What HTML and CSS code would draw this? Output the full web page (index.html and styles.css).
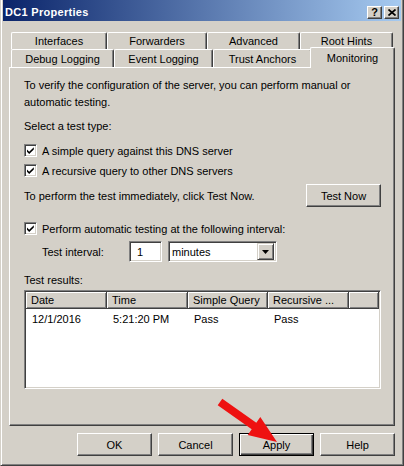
FILE: index.html
```html
<!DOCTYPE html>
<html>
<head>
<meta charset="utf-8">
<title>DC1 Properties</title>
<link rel="stylesheet" href="styles.css">
</head>
<body>
<div class="window">
  <div class="titlebar">
    <span class="title">DC1 Properties</span>
    <div class="caption-btns">
      <span class="cap-btn help">?</span>
      <span class="cap-btn close"><svg width="8" height="7" viewBox="0 0 8 7"><path d="M0.5 0.5 L7.5 6.5 M7.5 0.5 L0.5 6.5" stroke="#000" stroke-width="1.7" fill="none"/></svg></span>
    </div>
  </div>

  <div class="tabs">
    <div class="tab-row row1">
      <div class="tab w-interfaces">Interfaces</div>
      <div class="tab w-forwarders">Forwarders</div>
      <div class="tab w-advanced">Advanced</div>
      <div class="tab w-roothints">Root Hints</div>
    </div>
    <div class="tab-row row2">
      <div class="tab w-debug">Debug Logging</div>
      <div class="tab w-event">Event Logging</div>
      <div class="tab w-trust">Trust Anchors</div>
      <div class="tab w-monitoring active">Monitoring</div>
    </div>
  </div>

  <div class="panel">
    <p class="intro">To verify the configuration of the server, you can perform manual or<br>automatic testing.</p>
    <p class="line select-label">Select a test type:</p>

    <div class="check check1">
      <span class="box"><svg width="9" height="9" viewBox="0 0 9 9"><path d="M1 3.6 L3.2 5.8 L7.8 1.2 L7.8 3.4 L3.2 8 L1 5.8 Z" fill="#000"/></svg></span>
      <span class="check-label">A simple query against this DNS server</span>
    </div>
    <div class="check check2">
      <span class="box"><svg width="9" height="9" viewBox="0 0 9 9"><path d="M1 3.6 L3.2 5.8 L7.8 1.2 L7.8 3.4 L3.2 8 L1 5.8 Z" fill="#000"/></svg></span>
      <span class="check-label">A recursive query to other DNS servers</span>
    </div>

    <div class="now-row">
      <span>To perform the test immediately, click Test Now.</span>
      <span class="btn">Test Now</span>
    </div>

    <div class="check check3">
      <span class="box"><svg width="9" height="9" viewBox="0 0 9 9"><path d="M1 3.6 L3.2 5.8 L7.8 1.2 L7.8 3.4 L3.2 8 L1 5.8 Z" fill="#000"/></svg></span>
      <span class="check-label">Perform automatic testing at the following interval:</span>
    </div>

    <div class="interval-row">
      <span class="interval-label">Test interval:</span>
      <span class="field num">1</span>
      <span class="field combo">
        <span class="combo-text">minutes</span>
        <span class="combo-btn"><svg width="7" height="4" viewBox="0 0 7 4"><path d="M0 0 H7 L3.5 4 Z" fill="#000"/></svg></span>
      </span>
    </div>

    <p class="line results-label">Test results:</p>

    <div class="listbox">
      <div class="lv-header">
        <span class="hcell c1">Date</span>
        <span class="hcell c2">Time</span>
        <span class="hcell c3">Simple Query</span>
        <span class="hcell c4">Recursive ...</span>
        <span class="hcell c5"></span>
      </div>
      <div class="lv-row">
        <span class="cell c1">12/1/2016</span>
        <span class="cell c2">5:21:20 PM</span>
        <span class="cell c3">Pass</span>
        <span class="cell c4">Pass</span>
      </div>
    </div>
  </div>

  <div class="buttons">
    <span class="btn">OK</span>
    <span class="btn">Cancel</span>
    <span class="btn default">Apply</span>
    <span class="btn">Help</span>
  </div>
</div>

<svg class="arrow" width="404" height="466" viewBox="0 0 404 466">
  <polygon points="222.3,398.7 256.3,422.7 260.3,417 277,442 247.7,435 251.7,429.3 217.7,405.3" fill="#ee1111"/>
</svg>
</body>
</html>
```

FILE: styles.css
```css
* {
  box-sizing: border-box;
}

html,
body {
  margin: 0;
  padding: 0;
}

body {
  position: relative;
  width: 404px;
  height: 466px;
  overflow: hidden;
  background: #d4d0c8;
  font-family: "Liberation Sans", Arial, sans-serif;
  font-size: 11px;
  color: #000;
}

.window {
  height: 466px;
  border-left: 1px solid #d4d0c8;
  border-right: 1px solid #404040;
  border-bottom: 1px solid #404040;
  box-shadow: inset 1px 0 0 #fff, inset -1px -1px 0 #808080;
  padding: 0 2px 2px 2px;
  display: flex;
  flex-direction: column;
}

/* Title bar */
.titlebar {
  height: 21px;
  flex: none;
  display: flex;
  align-items: flex-start;
  justify-content: space-between;
  background: linear-gradient(to right, #0a246a, #a6caf0);
  padding: 0 2px 0 2px;
}

.title {
  color: #fff;
  font-weight: bold;
  font-size: 11px;
  letter-spacing: 0.3px;
  line-height: 13px;
  margin-top: 6px;
}

.caption-btns {
  display: flex;
  gap: 2px;
  margin-top: 6px;
}

.cap-btn {
  width: 15px;
  height: 13px;
  background: #d4d0c8;
  border: 1px solid;
  border-color: #fff #404040 #404040 #fff;
  box-shadow: inset -1px -1px 0 #808080;
  display: flex;
  align-items: center;
  justify-content: center;
  font-weight: bold;
  font-size: 11px;
  line-height: 11px;
}

/* Tabs */
.tabs {
  margin: 11px 8px 0 8px;
  flex: none;
}

.tab-row {
  display: flex;
}

.row1 {
  height: 17px;
}

.row2 {
  height: 18px;
}

.tab {
  flex: none;
  background: #d4d0c8;
  border-top: 1px solid #fff;
  border-left: 1px solid #fff;
  border-right: 1px solid #404040;
  box-shadow: inset -1px 0 0 #808080;
  border-radius: 2px 2px 0 0;
  display: flex;
  align-items: center;
  justify-content: center;
  white-space: nowrap;
}

.tab.active {
  margin: -2px -2px -1px -2px;
  position: relative;
  z-index: 1;
  padding-bottom: 1px;
}

.w-interfaces { width: 96px; }
.w-forwarders { width: 100px; }
.w-advanced { width: 93px; }
.w-roothints { width: 93px; }
.w-debug { width: 103px; }
.w-event { width: 99px; }
.w-trust { width: 99px; }
.w-monitoring { width: 85px; }

/* Panel */
.panel {
  flex: none;
  margin: 0 6px;
  height: 359px;
  border: 1px solid;
  border-color: #fff #404040 #404040 #fff;
  box-shadow: inset -1px -1px 0 #808080;
  padding: 9px 13px 0 14px;
}

.intro {
  margin: 0;
  line-height: 17px;
}

.line {
  margin: 0;
  line-height: 17px;
}

.select-label {
  margin-top: 7px;
}

.check {
  display: flex;
  align-items: center;
  height: 13px;
  gap: 5px;
}

.check1 { margin-top: 9px; }
.check2 { margin-top: 7px; }
.check3 { margin-top: 15px; }

.box {
  flex: none;
  width: 13px;
  height: 13px;
  background: #fff;
  border: 1px solid;
  border-color: #808080 #fff #fff #808080;
  box-shadow: inset 1px 1px 0 #404040, inset -1px -1px 0 #d4d0c8;
  padding: 1px;
  display: flex;
}

.box svg {
  display: block;
}

.now-row {
  margin-top: 7px;
  display: flex;
  align-items: center;
  justify-content: space-between;
}

.btn {
  width: 75px;
  height: 23px;
  background: #d4d0c8;
  border: 1px solid;
  border-color: #fff #404040 #404040 #fff;
  box-shadow: inset -1px -1px 0 #808080;
  display: flex;
  align-items: center;
  justify-content: center;
}

.btn.default {
  border-color: #000;
  box-shadow: inset 1px 1px 0 #fff, inset -1px -1px 0 #404040, inset -2px -2px 0 #808080;
}

.interval-row {
  margin-top: 6px;
  display: flex;
  align-items: center;
  height: 21px;
  padding-left: 18px;
}

.interval-label {
  width: 87px;
}

.field {
  height: 21px;
  background: #fff;
  border: 1px solid;
  border-color: #808080 #fff #fff #808080;
  box-shadow: inset 1px 1px 0 #404040, inset -1px -1px 0 #d4d0c8;
  display: flex;
  align-items: center;
}

.num {
  width: 33px;
  padding-left: 7px;
  margin-right: 6px;
}

.combo {
  width: 109px;
  padding: 2px;
  justify-content: space-between;
}

.combo-text {
  padding-left: 1px;
}

.combo-btn {
  width: 17px;
  height: 17px;
  background: #d4d0c8;
  border: 1px solid;
  border-color: #d4d0c8 #404040 #404040 #d4d0c8;
  box-shadow: inset 1px 1px 0 #fff, inset -1px -1px 0 #808080;
  display: flex;
  align-items: center;
  justify-content: center;
}

.combo-btn svg {
  display: block;
}

.results-label {
  margin-top: 10px;
}

.listbox {
  margin-top: 1px;
  height: 99px;
  background: #fff;
  border: 1px solid;
  border-color: #808080 #fff #fff #808080;
  box-shadow: inset 1px 1px 0 #404040, inset -1px -1px 0 #d4d0c8;
  padding: 1px;
}

.lv-header {
  display: flex;
  height: 17px;
}

.hcell {
  flex: none;
  background: #d4d0c8;
  border-right: 1px solid #404040;
  border-bottom: 1px solid #404040;
  box-shadow: inset 1px 1px 0 #fff, inset -1px -1px 0 #808080;
  padding-left: 5px;
  display: flex;
  align-items: center;
  white-space: nowrap;
}

.c1 { width: 81px; }
.c2 { width: 81px; }
.c3 { width: 80px; }
.c4 { width: 81px; }

.hcell.c5 {
  flex: 1;
}

.lv-row {
  display: flex;
  height: 17px;
  margin-top: 1px;
}

.cell {
  flex: none;
  padding-left: 6px;
  display: flex;
  align-items: center;
  white-space: nowrap;
}

/* Bottom buttons */
.buttons {
  flex: none;
  display: flex;
  justify-content: flex-end;
  gap: 6px;
  margin: 7px 6px 0 0;
}

.arrow {
  position: absolute;
  top: 0;
  left: 0;
  pointer-events: none;
}
```
